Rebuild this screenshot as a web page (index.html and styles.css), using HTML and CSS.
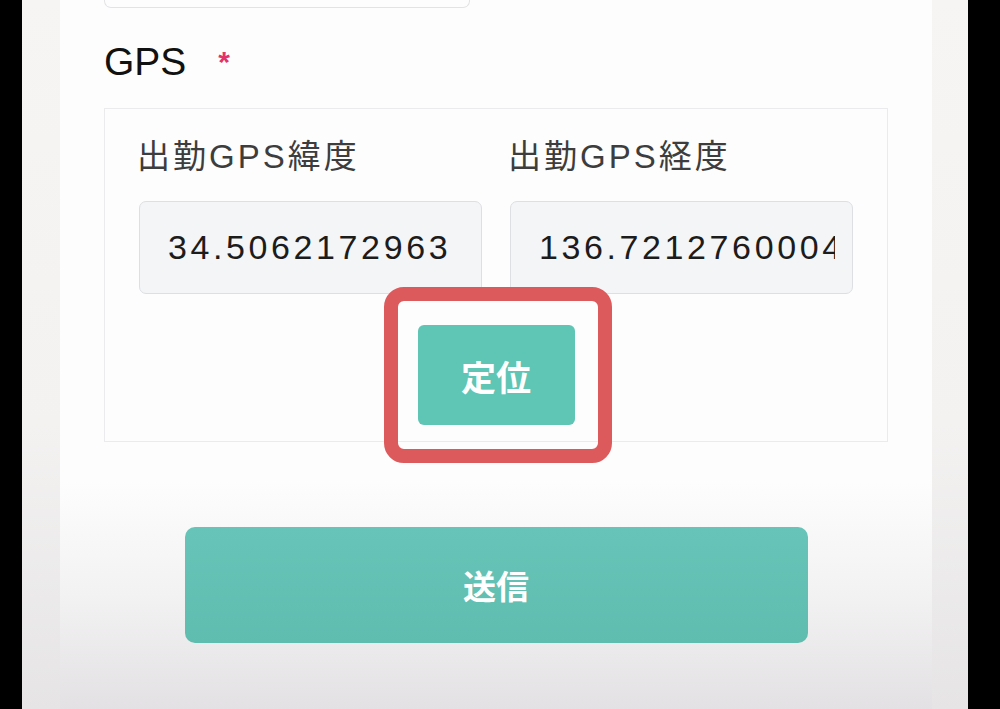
FILE: index.html
```html
<!DOCTYPE html>
<html lang="ja">
<head>
    <meta charset="UTF-8">
    <meta name="viewport" content="width=device-width, initial-scale=1.0">
    <title>出勤</title>
    <link rel="stylesheet" href="styles.css">
</head>
<body>

    <div class="frame">
        <div class="page">
            <div class="prev-input"></div>

            <label class="field-title">GPS <span class="required">*</span></label>

            <div class="gps-card">
                <div class="gps-grid">
                    <div class="gps-col">
                        <label class="gps-label">出勤GPS緯度</label>
                        <input class="gps-input" type="text" value="34.5062172963" readonly>
                    </div>
                    <div class="gps-col">
                        <label class="gps-label">出勤GPS経度</label>
                        <input class="gps-input" type="text" value="136.7212760004" readonly>
                    </div>
                </div>
                <div class="locate-row">
                    <div class="locate-wrap">
                        <button class="locate-btn">定位</button>
                        <div class="highlight"></div>
                    </div>
                </div>
            </div>

            <div class="submit-row">
                <button class="submit-btn">送信</button>
            </div>
        </div>
    </div>

</body>
</html>
```

FILE: styles.css
```css
html, body {
    margin: 0;
    height: 100%;
}
body {
    background: #000;
    font-family: "Liberation Sans", "Noto Sans CJK JP", sans-serif;
    overflow: hidden;
}
.frame {
    margin: 0 32px 0 22px;
    height: 709px;
    padding: 0 36px 0 38px;
    background: linear-gradient(#f6f5f4 0, #f3f2f1 60%, #e6e4e5 100%);
}
.page {
    height: 100%;
    padding-left: 44px;
    background: linear-gradient(#fefdfe 0, #fefdfe 68%, #f3f2f3 84%, #e3e1e3 100%);
}
.prev-input {
    width: 364px;
    height: 7px;
    border: 1px solid #e3e3e5;
    border-top: none;
    border-radius: 0 0 7px 7px;
}
.field-title {
    display: block;
    margin-top: 30px;
    font-size: 39px;
    line-height: 48px;
    color: #111;
}
.required {
    color: #e2336b;
    font-size: 30px;
    font-weight: bold;
    vertical-align: top;
    margin-left: 21px;
}
.gps-card {
    width: 784px;
    box-sizing: border-box;
    margin-top: 22px;
    border: 1px solid #ebebed;
    padding: 26px 34px 16px 34px;
}
.gps-grid {
    display: grid;
    grid-template-columns: 1fr 1fr;
    gap: 28px;
}
.gps-label {
    display: block;
    font-size: 33px;
    line-height: 44px;
    color: #3d3d3d;
    letter-spacing: 3px;
    margin-left: -2px;
}
.gps-input {
    display: block;
    width: 100%;
    box-sizing: border-box;
    height: 93px;
    margin-top: 22px;
    padding: 0 17px 0 28px;
    border: 1px solid #dedfe2;
    border-radius: 7px;
    background: #f4f5f7;
    font-family: "Liberation Sans", sans-serif;
    font-size: 34px;
    letter-spacing: 3.6px;
    color: #1c1c1c;
    outline: none;
}
.locate-row {
    display: flex;
    justify-content: center;
    margin-top: 31px;
}
.locate-wrap {
    position: relative;
}
.locate-btn {
    display: block;
    width: 157px;
    height: 100px;
    border: none;
    border-radius: 6px;
    background: #5fc5b5;
    color: #fff;
    font-family: "Noto Sans CJK JP", sans-serif;
    font-weight: bold;
    font-size: 35px;
}
.highlight {
    position: absolute;
    left: -34px;
    top: -38px;
    right: -37px;
    bottom: -38px;
    border: 14px solid #dd5a5c;
    border-radius: 20px;
}
.submit-row {
    display: flex;
    justify-content: center;
    margin-top: 85px;
    width: 784px;
}
.submit-btn {
    width: 623px;
    height: 116px;
    border: none;
    border-radius: 10px;
    background: linear-gradient(#66c4b8, #5fbdb0);
    color: #fff;
    font-family: "Noto Sans CJK JP", sans-serif;
    font-weight: bold;
    font-size: 33px;
}
```
